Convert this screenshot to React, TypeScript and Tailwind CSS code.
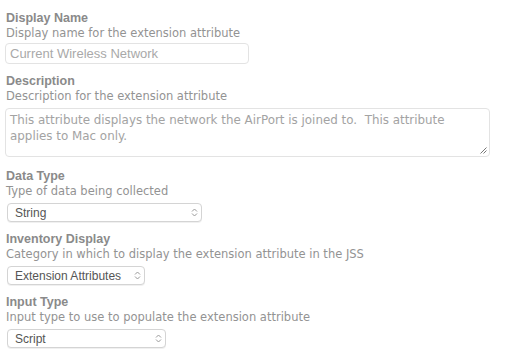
import React from 'react';

const Chevrons = () => (
  <svg width="7" height="11" viewBox="0 0 7 11" fill="none" stroke="#9a9a9a" strokeWidth="1" className="shrink-0">
    <path d="M1 4.5 L3.5 2 L6 4.5" />
    <path d="M1 6.5 L3.5 9 L6 6.5" />
  </svg>
);

const Select = ({ value, width }: { value: string; width: string }) => (
  <div
    className={`${width} ml-[1px] flex h-[19px] items-center justify-between rounded-[4px] border border-[#d4d4d4] bg-white pl-[7px] pr-[3px] font-['Liberation_Sans',Arial,sans-serif] text-[12px] text-[#555] shadow-[0_1px_0_rgba(0,0,0,0.06)]`}
  >
    <span>{value}</span>
    <Chevrons />
  </div>
);

const Field = ({
  label,
  desc,
  className,
  gap = 'mt-[4px]',
  children,
}: {
  label: string;
  desc: string;
  className?: string;
  gap?: string;
  children: React.ReactNode;
}) => (
  <div className={className}>
    <div className="font-['Liberation_Sans',Arial,sans-serif] text-[12.5px] font-bold leading-[15px] text-[#8a8a8a]">{label}</div>
    <div className="text-[11.5px] leading-[15px] text-[#939393]">{desc}</div>
    <div className={gap}>{children}</div>
  </div>
);

export default function App() {
  return (
    <div className="h-[355px] w-[524px] overflow-hidden bg-white pl-[5px] pt-[11px] font-['DejaVu_Sans',Verdana,sans-serif]">
      <Field label="Display Name" desc="Display name for the extension attribute" className="pl-[1px]" gap="mt-[2px]">
        <div className="-ml-[1px] flex h-[21px] w-[244px] items-center rounded-[4px] border border-[#e3e3e3] pl-[4px] font-['Liberation_Sans',Arial,sans-serif] text-[13px] text-[#a9a9a9]">
          Current Wireless Network
        </div>
      </Field>

      <Field label="Description" desc="Description for the extension attribute" className="mt-[10px] pl-[1px]">
        <div className="relative -ml-[1px] h-[49px] w-[485px] rounded-[4px] border border-[#e3e3e3] pl-[4px] pt-[3px] text-[11.9px] leading-[16px] text-[#a3a3a3]">
          This attribute displays the network the AirPort is joined to.&nbsp; This attribute
          <br />
          applies to Mac only.
          <svg width="7" height="7" viewBox="0 0 7 7" className="absolute bottom-[2px] right-[2px]" stroke="#777" strokeWidth="1">
            <path d="M0.5 6.5 L6.5 0.5" />
            <path d="M3.5 6.5 L6.5 3.5" />
          </svg>
        </div>
      </Field>

      <Field label="Data Type" desc="Type of data being collected" className="mt-[12px] pl-[1px]">
        <Select value="String" width="w-[195px]" />
      </Field>

      <Field label="Inventory Display" desc="Category in which to display the extension attribute in the JSS" className="mt-[10px] pl-[1px]">
        <Select value="Extension Attributes" width="w-[138px]" />
      </Field>

      <Field label="Input Type" desc="Input type to use to populate the extension attribute" className="mt-[10px] pl-[1px]">
        <Select value="Script" width="w-[159px]" />
      </Field>
    </div>
  );
}
